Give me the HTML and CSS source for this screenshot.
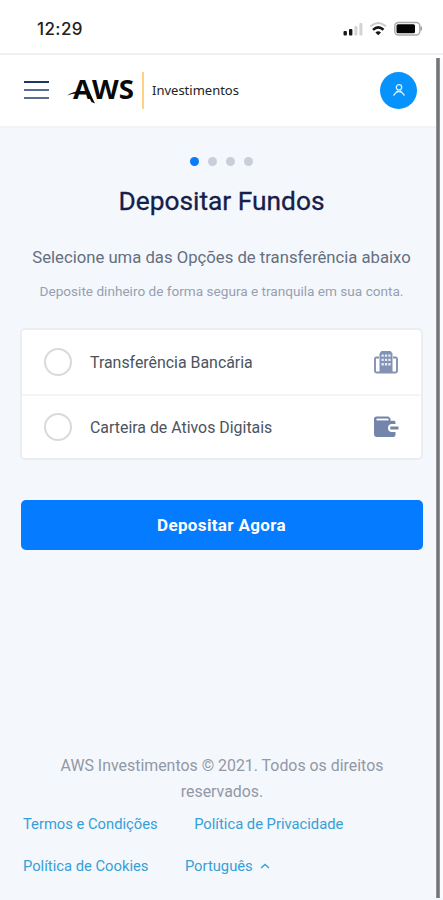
FILE: index.html
```html
<!DOCTYPE html>
<html lang="pt">
<head>
<meta charset="utf-8">
<title>Depositar Fundos</title>
<link rel="stylesheet" href="styles.css">
</head>
<body>
<div class="status">
  <span class="time">12:29</span>
  <svg class="indicators" width="80" height="16" viewBox="0 0 80 16">
    <g fill="#171717"><rect x="0.500" y="10" width="3.4" height="4.5" rx="1"/><rect x="6" y="8" width="3.4" height="6.5" rx="1"/></g>
    <g fill="#d4d4d4"><rect x="11.4" y="5" width="3" height="9.5" rx="1"/><rect x="16.400" y="2" width="3" height="12.5" rx="1"/></g>
    <g fill="none"><path d="M27.5 5.3Q35.2-1.2 43 5.3" stroke="#c9c9c9" stroke-width="2"/><path d="M30 8.8Q35.2 4 40.5 8.8" stroke="#151515" stroke-width="2.5"/></g>
    <path d="M32.4 11.5Q35.2 9.2 38 11.5L35.2 14.2Z" fill="#151515"/>
    <rect x="51.8" y="1.5" width="25" height="12.5" rx="3.5" fill="#fff" stroke="#aaa" stroke-width="1.4"/>
    <rect x="53.5" y="3.2" width="18.5" height="9" rx="1.5" fill="#050505"/>
    <path d="M78.2 5.5v4" stroke="#999" stroke-width="1.5"/>
  </svg>
</div>
<div class="page">
  <header class="top">
    <svg class="menu" width="25" height="20" viewBox="0 0 25 20"><path d="M0 2h25" stroke="#1f3768" stroke-width="2"/><path d="M0 10h25M0 18h25" stroke="#5b6d91" stroke-width="2"/></svg>
    <svg class="logo" width="68" height="30" viewBox="0 0 68 30">
      <text class="mark" x="6" y="24" textLength="61" lengthAdjust="spacingAndGlyphs">AWS</text>
      <path d="M0 20.5Q7 15.5 16 16L15.5 19Q7 17.5 0 20.5ZM17.5 14L22 16L28 28.5L24.5 27Z" fill="#090909"/>
    </svg>
    <span class="divider"></span>
    <span class="brand">Investimentos</span>
    <span class="avatar"><svg width="14" height="14" viewBox="0 0 14 14" fill="none" stroke="#d9f0ff" stroke-width="1.3"><circle cx="7" cy="4.3" r="2.7"/><path d="M1.5 12.5L5.7 7.6M8.3 7.6L12.5 12.5M4.3 9.6Q7 7.5 9.7 9.6"/></svg></span>
  </header>
  <main>
    <div class="dots"><i class="on"></i><i></i><i></i><i></i></div>
    <h1>Depositar Fundos</h1>
    <p class="lead">Selecione uma das Opções de transferência abaixo</p>
    <p class="sub">Deposite dinheiro de forma segura e tranquila em sua conta.</p>
    <div class="options">
      <label class="option"><span class="radio"></span><span>Transferência Bancária</span>
        <svg width="26" height="26" viewBox="0 0 26 26"><path d="M6.5 24V4.5L8.5 2h9l2 2.500V24Z" fill="#8292b5"/><path d="M6 8.5H3.5Q2 8.5 2 10v12Q2 23.500 3.500 23.500h19Q24 23.500 24 22V10Q24 8.500 22.500 8.500H20" fill="none" stroke="#8292b5" stroke-width="1.900"/><path d="M8.500 5.500h2.300v2.300h-2.300zM11.900 5.500h2.300v2.300h-2.300zM15.300 5.500h2.300v2.300h-2.300zM8.500 9.800h2.300v2.300h-2.300zM11.900 9.800h2.300v2.300h-2.300zM15.300 9.800h2.300v2.300h-2.300zM8.500 14.100h2.300v2.300h-2.300zM11.900 14.100h2.300v2.300h-2.300zM15.300 14.100h2.300v2.300h-2.300z" fill="#e6ebf5"/></svg>
      </label>
      <label class="option"><span class="radio"></span><span>Carteira de Ativos Digitais</span>
        <svg width="26" height="26" viewBox="0 0 26 26"><path d="M3.500 2.500h12l2 2v2.200h3.500Q22.500 6.700 22.500 8.200V10h-4.300Q15 10.500 15 14t3.200 4h4.300v2.500Q22.500 23 20 23H4Q1 23 1 20V5Q1 2.500 3.500 2.500Z" fill="#7485ab"/><path d="M3.500 5.500h12" stroke="#fff" stroke-width="1.800"/><path d="M17.300 12.500H25.500v3h-8.200Z" fill="#7485ab"/></svg>
      </label>
    </div>
    <button class="submit">Depositar Agora</button>
  </main>
  <footer>
    <p class="copy">AWS Investimentos © 2021. Todos os direitos<br>reservados.</p>
    <div class="links first"><a>Termos e Condições</a><a>Política de Privacidade</a></div>
    <div class="links"><a>Política de Cookies</a><a>Português</a><svg width="10" height="8" viewBox="0 0 10 8"><path d="M1 6L5 2.5L9 6" fill="none" stroke="#359fd8" stroke-width="1.4"/></svg></div>
  </footer>
  <div class="scrollbar"></div>
</div>
</body>
</html>
```
FILE: styles.css
```css
* { box-sizing: border-box; }
body { margin: 0; width: 443px; height: 900px; overflow: hidden; background: #fff; font-family: Roboto, sans-serif; display: flex; flex-direction: column; }
h1, p { margin: 0; font-weight: 400; white-space: nowrap; }
.status { height: 55px; border-bottom: 2px solid #efeff1; display: flex; justify-content: space-between; align-items: flex-start; padding: 18px 20px 0 37px; }
.time { font: 500 17px/22px Inter, sans-serif; color: #222; letter-spacing: .4px; }
.indicators { margin-top: 3px; }
.page { position: relative; flex: 1; display: flex; flex-direction: column; background: #f4f7fc; }
.top { height: 73px; background: #fff; border-bottom: 2px solid #f1f3f6; display: flex; align-items: center; padding: 0 26px 1px 24px; }
.logo { margin-left: 18px; overflow: visible; }
.mark { font: 700 26px "Open Sans", sans-serif; fill: #090909; }
.divider { width: 2px; height: 37px; background: #ffd183; margin: 0 8px 0 7px; }
.brand { font: 400 13px/20px "Noto Sans", sans-serif; color: #222; }
.avatar { width: 37px; height: 37px; margin-left: auto; border-radius: 50%; background: #0693fd; display: flex; align-items: center; justify-content: center; }
main { display: flex; flex-direction: column; align-items: center; padding: 29px 20px 0; }
.dots { display: flex; gap: 9px; height: 10px; }
.dots i { width: 9px; height: 9px; border-radius: 50%; background: #c9ceda; }
.dots .on { background: #087bfa; }
h1 { font-size: 26.3px; line-height: 36px; color: #14204a; margin-top: 16px; -webkit-text-stroke: .3px #14204a; }
.lead { font-size: 16.7px; line-height: 24px; color: #656f80; margin-top: 27px; }
.sub { font-size: 13.6px; line-height: 20px; color: #979fb0; margin-top: 11px; }
.options { width: 403px; height: 132px; margin-top: 27px; background: #fff; border: 2px solid #ebedf1; border-radius: 5px; }
.option { height: 64px; display: flex; align-items: center; padding: 0 22px; font-size: 15.9px; color: #4c535e; }
.option + .option { border-top: 2px solid #f3f4f6; }
.option svg { margin-left: auto; }
.radio { width: 28px; height: 28px; border: 2px solid #d9dadd; border-radius: 50%; margin-right: 18px; }
.submit { width: 402px; height: 50px; margin-top: 40px; padding: 0; border: 0; border-radius: 5px; background: #057bff; color: #fff; font: 700 17px Roboto, sans-serif; letter-spacing: .35px; }
footer { margin-top: auto; height: 147px; padding-left: 23px; }
.copy { font-size: 15.9px; line-height: 26px; color: #9298a5; text-align: center; padding-right: 22px; }
.links { display: flex; align-items: center; height: 20px; margin-top: 22px; font-size: 14.75px; color: #359fd8; }
.links.first { margin-top: 9px; }
.links a + a { margin-left: 36.5px; }
.links svg { margin-left: 7px; }
.scrollbar { position: absolute; right: 0; top: 3px; bottom: 2px; width: 7px; border-right: 3px solid #fafbfc; background: linear-gradient(90deg, #a5a7aa, #737477 30%, #737477 70%, #a5a7aa); }
```
